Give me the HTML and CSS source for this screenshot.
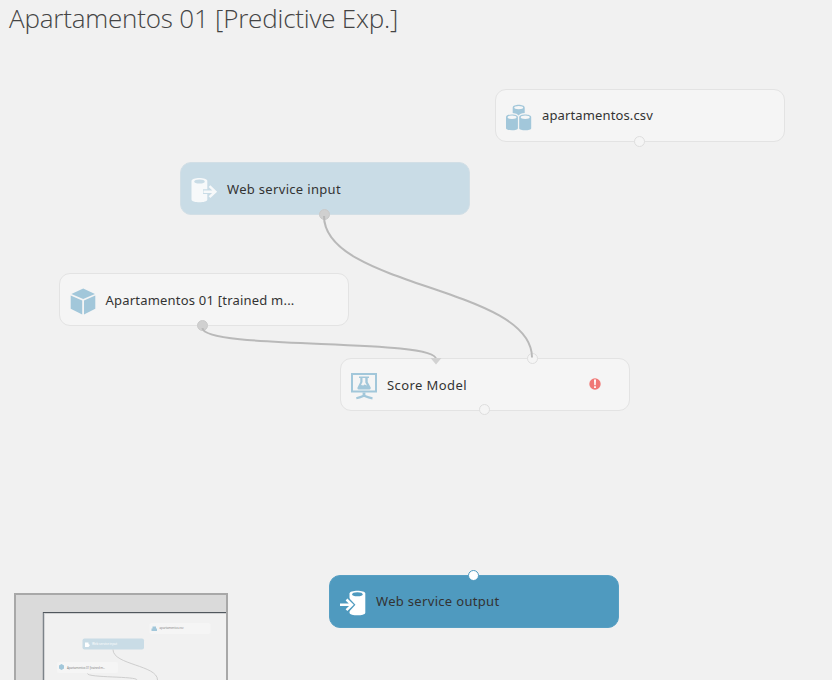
FILE: index.html
```html
<!DOCTYPE html>
<html lang="en">
<head>
<meta charset="utf-8">
<title>Apartamentos 01 [Predictive Exp.]</title>
<link rel="stylesheet" href="styles.css">
</head>
<body>
<main class="canvas">
  <h1 class="title">Apartamentos 01 [Predictive Exp.]</h1>

  <section class="node dataset">
    <svg class="icon" viewBox="0 0 28 28">
      <g fill="#a2c7da">
        <path d="M7.700 4.600C7.700 .8 19.700 .8 19.700 4.600V10Q15 10.300 13.700 12.500Q12 10.300 7.700 10Z"/>
        <path d="M1 14C1 10.500 12.900 10.500 12.900 14V25.300C12.900 28 1 28 1 25.300Z"/>
        <path d="M14.200 14C14.200 10.500 26.200 10.500 26.200 14V25.300C26.200 28 14.200 28 14.200 25.300Z"/>
      </g>
      <g fill="#f7f7f7"><ellipse cx="13.700" cy="4.600" rx="4.500" ry="1.700"/><ellipse cx="7" cy="14.300" rx="4.500" ry="1.700"/><ellipse cx="20.200" cy="14.300" rx="4.500" ry="1.700"/></g>
    </svg>
    <span class="label">apartamentos.csv</span>
    <i class="port bottom"></i>
  </section>

  <section class="node input">
    <svg class="icon" viewBox="0 0 28 28">
      <path fill="#f7f9fa" d="M1.500 5C1.500.9 17.300.9 17.300 5V23.500C17.300 27.200 1.500 27.200 1.500 23.500Z"/>
      <ellipse cx="9.500" cy="5.400" rx="5.200" ry="2" fill="#c9dce6"/>
      <path d="M13 15.700H25M19.500 10.200L25.300 15.700L19.500 21.200" fill="none" stroke="#c9dce6" stroke-width="4.800"/>
      <path d="M13.500 15.700H25M19.500 10.200L25.300 15.700L19.500 21.200" fill="none" stroke="#f7f9fa" stroke-width="2.500"/>
    </svg>
    <span class="label">Web service input</span>
    <i class="port bottom linked"></i>
  </section>

  <section class="node trained">
    <svg class="icon" viewBox="0 0 28 28">
      <path fill="#a2c7da" d="M14.200 1.500L26 6.900L14.200 12L2.400 6.900ZM1.700 8.500L13.200 13.500V27.400L1.700 21.800ZM26.300 8.500L15 13.500V27.400L26.300 21.800Z"/>
    </svg>
    <span class="label">Apartamentos 01 [trained m...</span>
    <i class="port bottom linked"></i>
  </section>

  <section class="node score">
    <svg class="icon" viewBox="0 0 28 28">
      <path fill="#a2c7da" fill-rule="evenodd" d="M1 1H27V20.500H1ZM3 3V18.500H25V3Z"/>
      <path fill="#a2c7da" d="M9 4.500H19V6H17.700V10L20.700 15.500Q21 17.300 19.500 17.500H8.500Q7 17.300 7.500 15.500L10.300 10V6H9Z"/>
      <path fill="#f5f5f5" d="M12.500 6H15.300V10.500L17 13.500L14.500 12.500L13.300 13.500L11 13L12.500 10Z"/>
      <path fill="#a2c7da" d="M12.600 20.500H15.400V25H12.600Z"/>
      <path fill="none" stroke="#a2c7da" stroke-width="2.200" d="M6.300 26.300Q9 25.700 14 23.700Q19 25.700 22.500 26.300"/>
    </svg>
    <span class="label">Score Model</span>
    <svg class="alert" viewBox="0 0 12 12"><circle cx="6" cy="6" r="5.700" fill="#f07876"/><path fill="#fff" d="M5 1.500H7L6.700 7.200H5.300ZM5.100 8.300H6.900V10H5.100Z"/></svg>
    <i class="port top"></i>
    <i class="port bottom"></i>
  </section>

  <section class="node output">
    <svg class="icon" viewBox="0 0 28 28">
      <path fill="#fff" d="M10.500 4.500C10.500.8 26.300.8 26.300 4.500V23.700C26.300 27.200 10.500 27.200 10.500 23.700Z"/>
      <ellipse cx="18.400" cy="5.200" rx="5.200" ry="2" fill="#4f9abf"/>
      <path d="M8 10.500L13 15.800L8 21.200" fill="none" stroke="#4f9abf" stroke-width="5"/>
      <path d="M1 15.800H12.500M7.500 10.500L13 15.800L7.500 21.200" fill="none" stroke="#fff" stroke-width="2.500"/>
    </svg>
    <span class="label">Web service output</span>
    <i class="port top"></i>
  </section>

  <svg class="wires" viewBox="0 0 832 680">
    <path d="M324 216C324 287 532 287 532 357.500"/>
    <path d="M202.500 328C202.500 350 436 338 436 359"/>
    <path class="arrow" d="M430.500 358H441.500L436 364.500Z"/>
  </svg>

  <aside class="minimap">
    <svg class="overview" viewBox="0 0 210 85">
      <rect width="210" height="85" fill="#dadada"/>
      <rect x="27" y="17" width="183" height="68" fill="#f1f1f1"/>
      <path d="M27.500 85V17" stroke="#7c8389" stroke-width="1.500"/>
      <path d="M27 17.500H210" stroke="#50575d"/>
      <path d="M28 18.500H210" stroke="#d0d1d2"/>
      <g fill="#f5f5f5"><rect x="133.500" y="28" width="61" height="11" rx="2"/><rect x="41" y="67" width="61" height="11" rx="2"/></g>
      <rect x="66.500" y="43.500" width="61.500" height="11" rx="2" fill="#c9dce6"/>
      <path fill="#a2c7da" d="M136.500 31.500H140V33.500H141V36H135.500V33.500H136.500ZM43 70.500L45.500 69L48 70.500V73.500L45.500 75L43 73.500Z"/>
      <path fill="#fff" d="M69 47.500H72.500V49L74 50L72.500 52H69Z"/>
      <g class="tiny"><text x="143.500" y="34.200" textLength="24">apartamentos.csv</text><text class="white" x="76" y="50.200" textLength="25">Web service input</text><text x="51" y="73.800" textLength="38">Apartamentos 01 [trained m...</text></g>
      <g fill="none" stroke="#cecece"><path d="M97 54.500C97 70 141.500 70 141.500 85"/><path d="M71.500 78.500C71.500 83 121 81 121 85"/></g>
    </svg>
  </aside>
</main>
</body>
</html>
```
FILE: styles.css
```css
* { box-sizing: border-box; }
body { margin: 0; background: #f1f1f1; font-family: "Noto Sans", "Open Sans", sans-serif; }
.canvas { position: relative; width: 832px; height: 680px; overflow: hidden; }
.title { margin: 0; padding-left: 9px; font: 300 26px/36px "Open Sans", "Noto Sans", sans-serif; letter-spacing: -.2px; color: #444; white-space: nowrap; }
.node { position: absolute; display: flex; align-items: center; width: 290px; height: 53px; padding-left: 9px; border: 1.500px solid #e3e3e3; border-radius: 11px; background: #f5f5f5; }
.dataset { left: 495px; top: 89px; letter-spacing: .13px; }
.input { left: 180px; top: 162px; letter-spacing: .32px; background: #c9dce6; border-color: #d2dfe6; }
.trained { left: 58.500px; top: 273px; letter-spacing: .21px; }
.score { left: 340px; top: 358px; letter-spacing: .42px; }
.output { left: 329px; top: 575px; letter-spacing: .32px; background: #4f9abf; border-color: #579fc3; }
.icon { width: 28px; height: 28px; flex: none; margin-top: 3px; }
.label { margin: -1px 0 0 9px; font-size: 13px; line-height: 20px; color: #333; white-space: nowrap; }
.input .label, .trained .label, .score .label { margin-top: 1px; }
.port { position: absolute; left: 137.500px; width: 11px; height: 11px; border: 1px solid #dedede; border-radius: 50%; background: #f5f5f5; }
.bottom { bottom: -6px; }
.top { top: -6px; }
.linked { background: #d0d0d0; border-color: #cacaca; }
.score .top { left: 186px; }
.score .bottom { bottom: -5px; }
.output .top { left: 138px; background: #fff; border-color: #4f9abf; }
.alert { position: absolute; left: 248px; top: 19px; width: 12px; height: 12px; }
.wires { position: absolute; inset: 0; width: 832px; height: 680px; fill: none; stroke: #b9b9b9; stroke-width: 2; pointer-events: none; }
.arrow { fill: #d2d2d2; stroke: none; }
.minimap { position: absolute; left: 14px; top: 593px; width: 214px; height: 100px; border: 2px solid #a8a8a8; background: #dadada; }
.overview { display: block; width: 210px; height: 85px; }
.tiny { font-size: 3px; fill: #888; }
.white { fill: #fff; }
```
